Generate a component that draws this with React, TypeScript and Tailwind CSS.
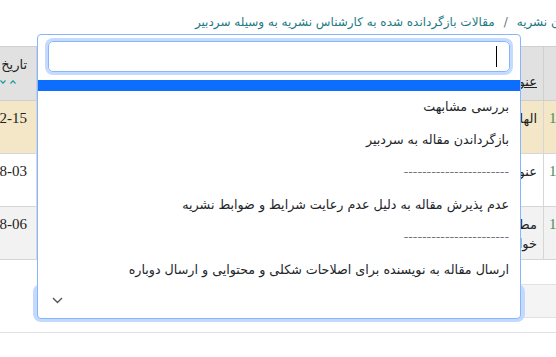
import { useState } from "react";

const options = [
	{ label: "بررسی مشابهت" },
	{ label: "بازگرداندن مقاله به سردبیر" },
	{ label: "-----------------------", muted: true },
	{ label: "عدم پذیرش مقاله به دلیل عدم رعایت شرایط و ضوابط نشریه" },
	{ label: "-----------------------", muted: true },
	{ label: "ارسال مقاله به نویسنده برای اصلاحات شکلی و محتوایی و ارسال دوباره" },
];

const rows = [
	{ bg: "bg-[#f3e7c8]", title: ["الهام گرفتن از طبیعت در معماری معاصر ایران"], date: "1402-12-15" },
	{ bg: "bg-white", title: ["عنوان مقاله ارسالی برای بررسی در نشریه"], date: "1403-08-03" },
	{ bg: "bg-[#f2f2f2]", title: ["مطالعه تطبیقی روش‌های ارزیابی کیفیت", "خواص مکانیکی مواد کامپوزیتی"], date: "1403-08-06" },
];

const SortArrows = () => (
	<span dir="ltr" className="inline-flex items-center gap-[4px] text-[#1f9a9a]">
		<svg width="6" height="4" viewBox="0 0 6 4" fill="none" stroke="currentColor" strokeWidth="1.2">
			<polyline points="0.5,0.5 3,3.2 5.5,0.5" />
		</svg>
		<svg width="6" height="4" viewBox="0 0 6 4" fill="none" stroke="currentColor" strokeWidth="1.2">
			<polyline points="0.5,3.5 3,0.8 5.5,3.5" />
		</svg>
	</span>
);

const App = () => {
	const [query, setQuery] = useState("");
	const fa = "font-['DejaVu_Sans',sans-serif]";
	return (
		<div className="relative w-[556px] h-[357px] overflow-hidden bg-white">
			<div dir="rtl" className={`w-[620px] ml-[-30px] ${fa}`}>
				{/* breadcrumb */}
				<div className="h-[46px] pt-[13px] text-[12px] leading-[18px] whitespace-nowrap text-[#1d7a84] flex gap-[9px] mr-[-16px]">
					<span>کارشناسان نشریه</span>
					<span className="text-[#6c757d]">/</span>
					<span>مقالات بازگردانده شده به کارشناس نشریه به وسیله سردبیر</span>
				</div>

				{/* table */}
				<div className="border-t border-[#cfcfcf]">
					<div className="grid grid-cols-[47px_507px_66px] h-[54px] bg-[#e1e1e1] border-b border-[#cfcfcf] text-[13px] text-[#222]">
						<div className="border-l border-[#cfcfcf]" />
						<div className="border-l border-[#cfcfcf] flex items-end pr-[6px] pb-[9px]">
							<span className="underline leading-[18px] whitespace-nowrap">عنوان مقاله</span>
						</div>
						<div className="flex flex-col justify-end pr-[9px] pb-[15px] whitespace-nowrap">
							<span className="leading-[18px] mb-[1px]">تاریخ ارسال</span>
							<span className="pr-[11px] leading-[10px]">
								<SortArrows />
							</span>
						</div>
					</div>
					{rows.map((row, i) => (
						<div
							key={`row-${i}`}
							className={`grid grid-cols-[47px_507px_66px] h-[53px] border-b border-[#d6d6d6] ${row.bg}`}>
							<div dir="ltr" className="border-l border-[#d6d6d6] text-left pl-[5px] pt-[7px] text-[15px] leading-[20px] text-[#4b8b5d] font-['Liberation_Serif',serif]">
								1
							</div>
							<div className="border-l border-[#d6d6d6] pr-[6px] pt-[8px] text-[13px] leading-[19px] text-[#222] whitespace-nowrap">
								{row.title.map((t, j) => (
									<div key={`t-${j}`}>{t}</div>
								))}
							</div>
							<div className="pr-[9px] pt-[7px] text-[15px] leading-[20px] text-[#222] font-['Liberation_Serif',serif] whitespace-nowrap">
								<span dir="ltr">{row.date}</span>
							</div>
						</div>
					))}
				</div>

				{/* select row */}
				<div className="flex items-start mt-[24px] h-[35px]">
					<div className="w-[69px] h-[34px] bg-[#f4f4f4] border-y border-[#e2e2e2]" />
					<div className="w-[484px] h-[30px] mt-[4px] bg-white border border-[#86b7fe] rounded-[4px] ring-4 ring-[#c3dafe]" />
				</div>
				<div className="mt-[13px] border-t border-[#dee2e6]" />
			</div>

			{/* open dropdown */}
			<div
				dir="rtl"
				className={`absolute left-[37px] top-[34px] w-[484px] h-[285px] bg-white border border-[#86b7fe] rounded-[4px] flex flex-col ${fa}`}>
				<div className="px-[10px] pt-[6px] pb-[8px]">
					<div className="h-[31px] border border-[#86b7fe] rounded-[5px] ring-[3px] ring-[#c5dbfd] flex items-center pr-[12px]">
						<input
							value={query}
							onChange={(e) => setQuery(e.target.value)}
							className="w-px h-[21px] bg-black outline-none border-0 p-0 text-transparent caret-transparent"
						/>
					</div>
				</div>
				<div className="h-[11px] bg-[#0d6efd]" />
				<ul className="text-[12.7px] leading-[20.5px] text-[#212529]">
					{options.map((o, i) => (
						<li
							key={`opt-${i}`}
							className={`pr-[11px] py-[6px] whitespace-nowrap ${o.muted ? "text-[#6c757d]" : ""}`}>
							{o.label}
						</li>
					))}
				</ul>
				<div className="flex-1 flex items-center justify-end pl-[14px] pb-[4px]">
					<svg width="11" height="7" viewBox="0 0 11 7" fill="none" stroke="#555" strokeWidth="1.4">
						<polyline points="1,1 5.5,5.5 10,1" />
					</svg>
				</div>
			</div>
		</div>
	);
};

export default App;
